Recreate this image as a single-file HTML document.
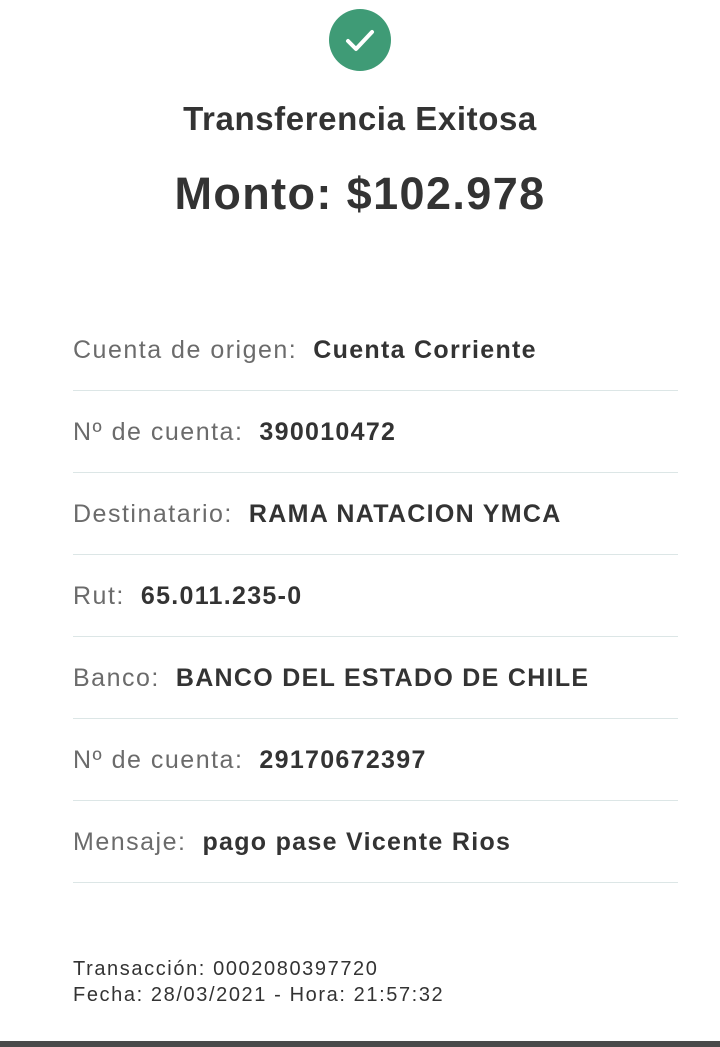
<!DOCTYPE html>
<html><head><meta charset="utf-8"><style>
body{margin:0;width:720px;height:1047px;background:#fff;font-family:"Liberation Sans",sans-serif;position:relative;overflow:hidden;color:#333}
.c{position:absolute;left:329px;top:9px;width:62px;height:62px;border-radius:50%;background:#3f9b76}
.t{position:absolute;left:0;width:720px;text-align:center;font-weight:bold;color:#333}
.row{position:absolute;left:73px;width:605px;height:52px;border-bottom:1px solid #dce6e6;font-size:25px;line-height:24px;letter-spacing:1.5px;padding-top:29px}
.row span{color:#6b6b6b}
.row b{color:#333;margin-left:16px;letter-spacing:1.3px}
.f{position:absolute;left:73px;font-size:20px;color:#333;line-height:26px;letter-spacing:1.6px}
.bar{position:absolute;left:0;top:1041px;width:720px;height:6px;background:#4a4a4a}
</style></head><body>
<div class="c"><svg width="62" height="62" viewBox="0 0 62 62"><path d="M19 32 L27 40 L43 23" fill="none" stroke="#fff" stroke-width="4" stroke-linecap="round" stroke-linejoin="round"/></svg></div>
<div class="t" style="top:100px;font-size:33px;letter-spacing:0.6px">Transferencia Exitosa</div>
<div class="t" style="top:168px;font-size:45px;letter-spacing:1.4px">Monto: $102.978</div>
<div class="row" style="top:309px"><span>Cuenta de origen:</span><b>Cuenta Corriente</b></div>
<div class="row" style="top:391px"><span>Nº de cuenta:</span><b>390010472</b></div>
<div class="row" style="top:473px"><span>Destinatario:</span><b>RAMA NATACION YMCA</b></div>
<div class="row" style="top:555px"><span>Rut:</span><b>65.011.235-0</b></div>
<div class="row" style="top:637px"><span>Banco:</span><b>BANCO DEL ESTADO DE CHILE</b></div>
<div class="row" style="top:719px"><span>Nº de cuenta:</span><b>29170672397</b></div>
<div class="row" style="top:801px"><span>Mensaje:</span><b>pago pase Vicente Rios</b></div>
<div class="f" style="top:956px">Transacción: 0002080397720<br>Fecha: 28/03/2021 - Hora: 21:57:32</div>
<div class="bar"></div>
</body></html>
